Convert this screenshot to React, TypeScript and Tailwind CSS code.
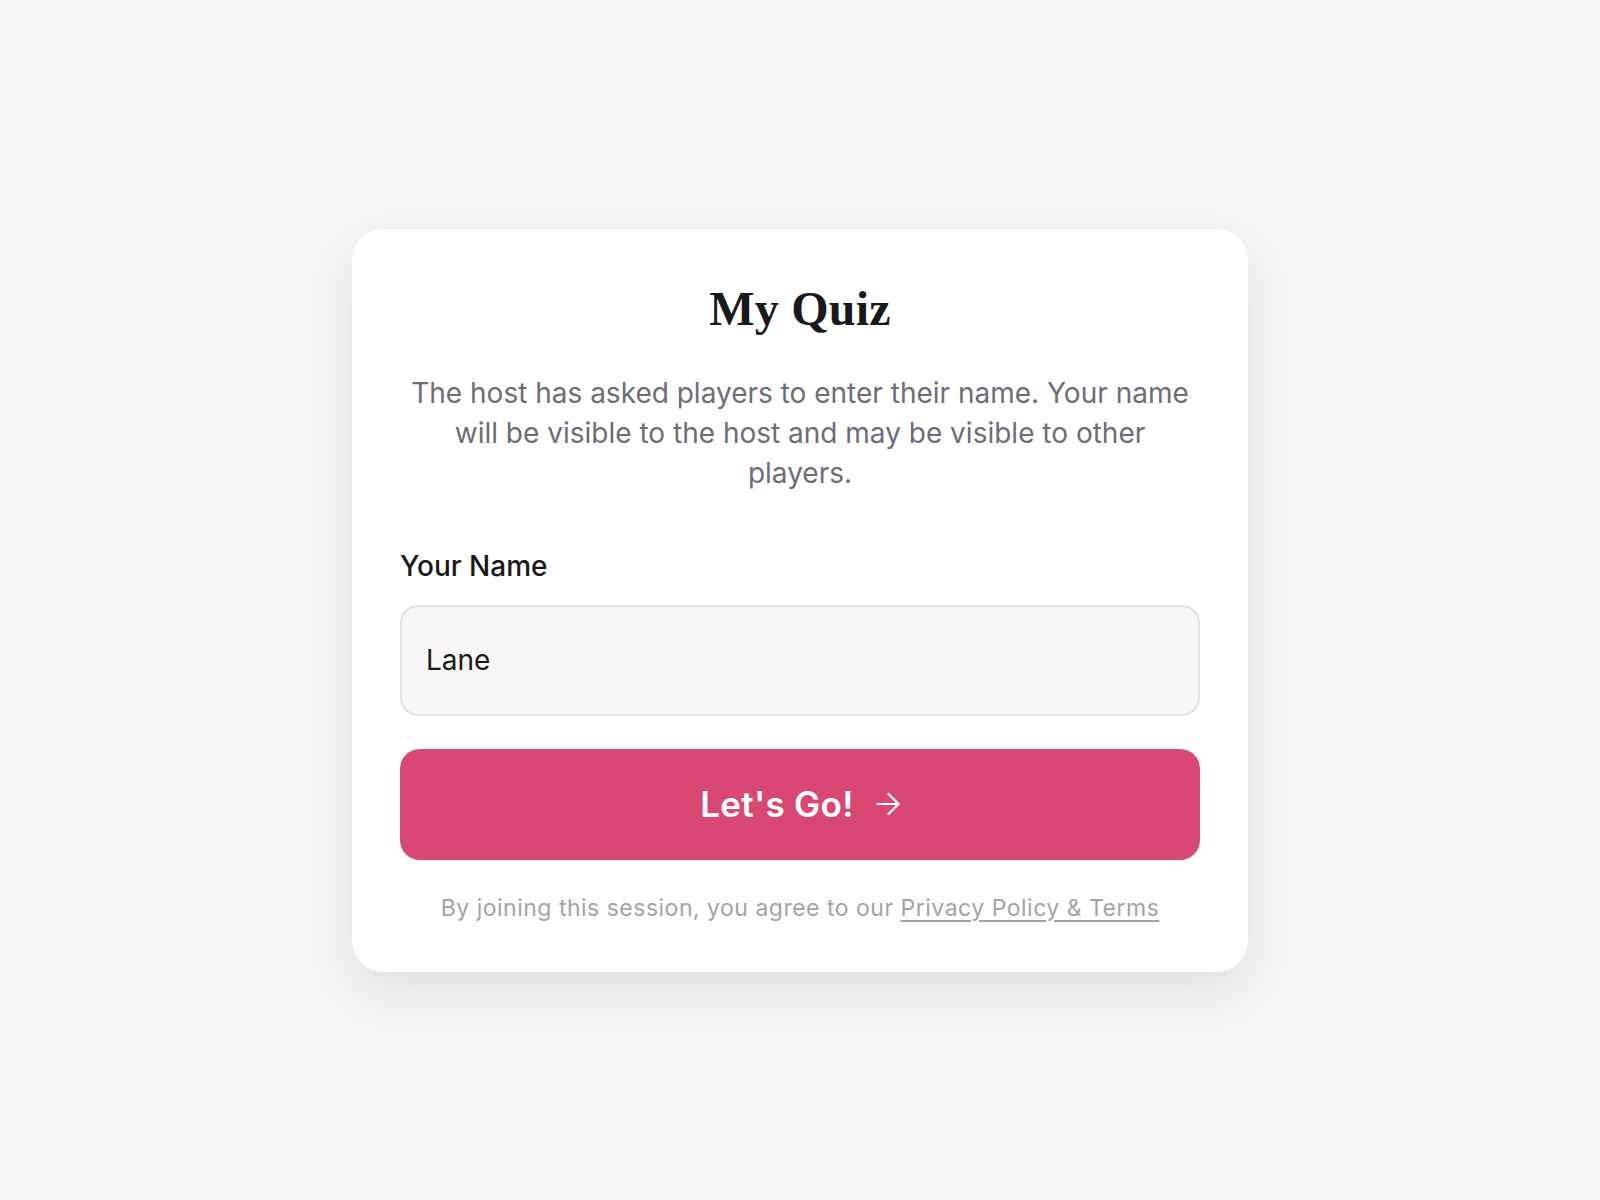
export default function App() {
  return (
    <div className="min-h-screen w-full bg-[#f7f6f4] flex items-center justify-center font-['Inter','Liberation_Sans',sans-serif]">
      <div className="w-[896px] bg-white rounded-[32px] px-12 pt-[52px] pb-12 shadow-[0_20px_50px_rgba(0,0,0,0.09)] flex flex-col">
        <h1 className="text-center font-['Liberation_Serif',serif] font-bold text-[48px] leading-[56px] text-[#19191d] tracking-[0.2px]">
          My Quiz
        </h1>
        <p className="mt-[36px] text-center text-[28px] leading-[40px] text-[#6d6d79] px-2">
          The host has asked players to enter their name. Your name will be visible to the host and may be visible to other players.
        </p>
        <label className="mt-[55px] text-[28px] leading-[36px] font-medium text-[#18181b]">
          Your Name
        </label>
        <input
          defaultValue="Lane"
          className="mt-[21px] h-[111px] w-full rounded-[18px] border-2 border-[#e4e1dc] bg-[#f8f7f5] px-6 text-[28px] text-[#18181b] outline-none"
        />
        <button className="mt-[33px] h-[111px] w-full rounded-[20px] bg-[#d94872] text-white flex items-center justify-center gap-[22px]">
          <span className="text-[35px] font-semibold leading-none tracking-[0.3px]">Let's Go!</span>
          <svg width="24" height="24" viewBox="0 0 24 24" fill="none" stroke="currentColor" strokeWidth="2.2" strokeLinecap="round" strokeLinejoin="round">
            <path d="M1.5 12h21" />
            <path d="M12.5 2l10 10-10 10" />
          </svg>
        </button>
        <p className="mt-[32px] text-center text-[23px] leading-[32px] tracking-[0.5px] text-[#a3a3ab]">
          By joining this session, you agree to our{' '}
          <a className="underline underline-offset-[4px] decoration-[1.5px]">Privacy Policy &amp; Terms</a>
        </p>
      </div>
    </div>
  )
}
